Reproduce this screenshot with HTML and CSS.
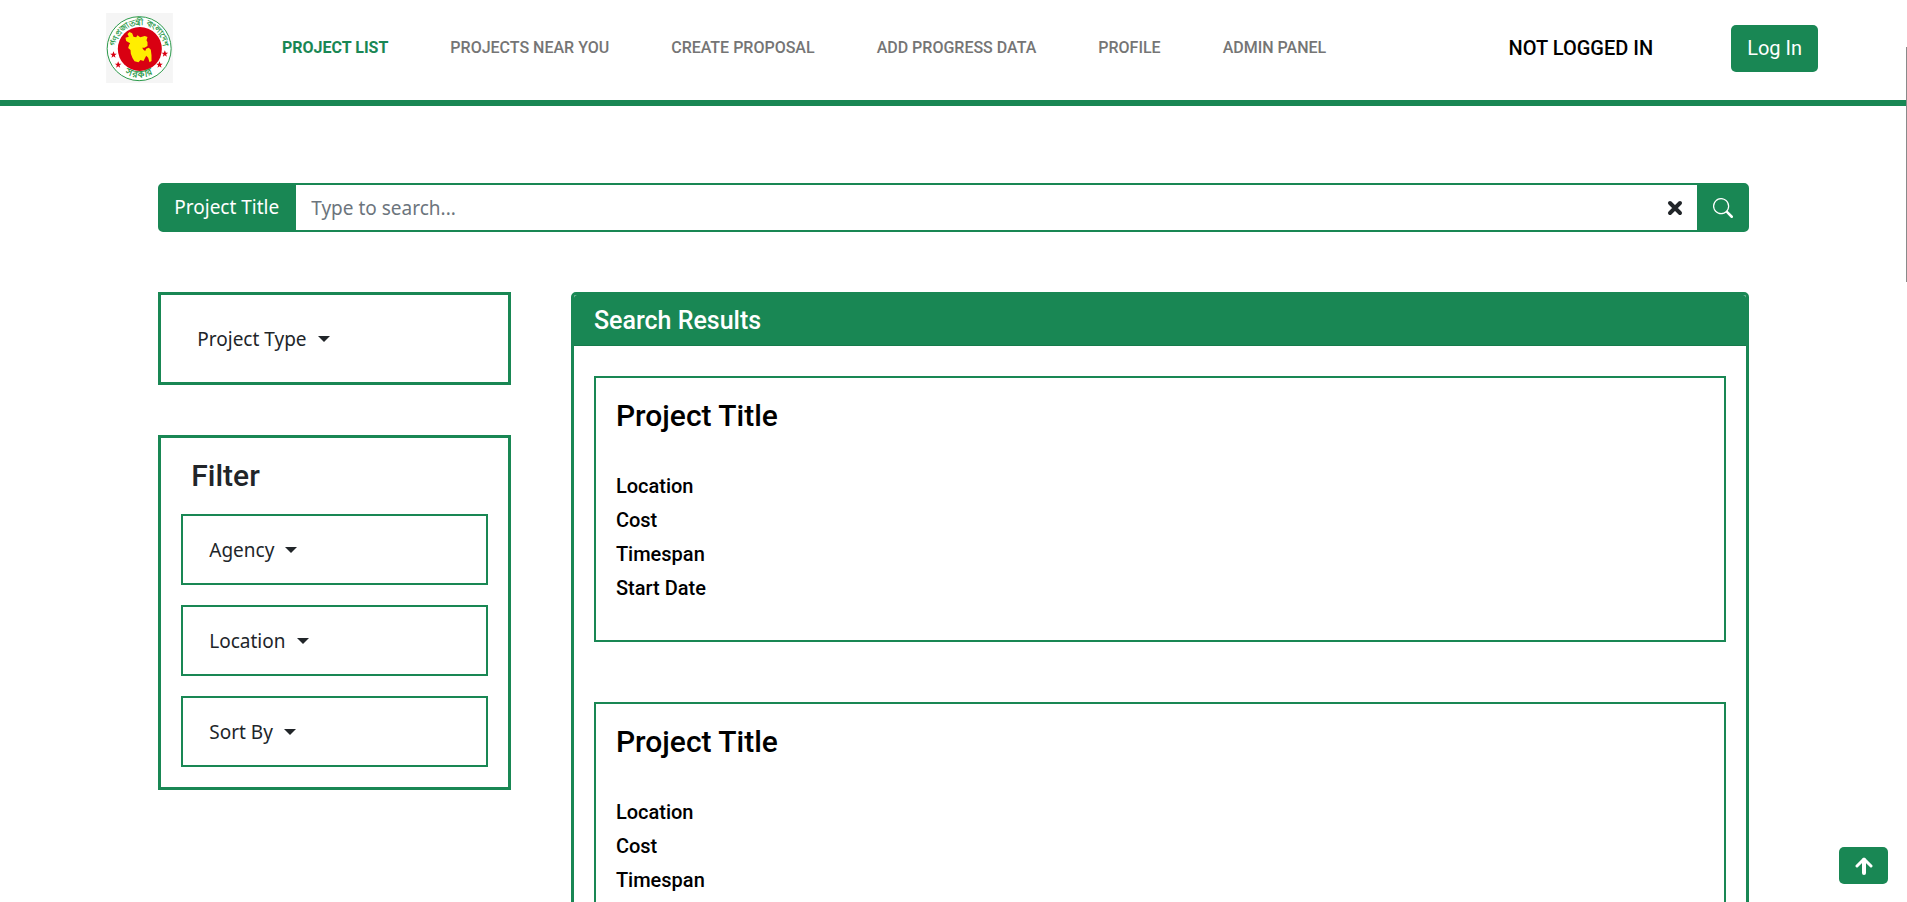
FILE: index.html
```html
<!DOCTYPE html>
<html lang="en">
<head>
<meta charset="utf-8">
<meta name="viewport" content="width=device-width, initial-scale=1">
<title>Project List</title>
<link rel="stylesheet" href="styles.css">
</head>
<body>
<header class="topbar">
  <a class="brand" href="#" aria-label="Home">
    <svg class="brand-logo" viewBox="48 39 200 210" aria-hidden="true">
      <defs>
        <path id="arc-top" d="M80 171 A72 72 0 1 1 216 171"/>
        <path id="arc-bottom" d="M76 196 A88 88 0 0 0 218 196"/>
        <path id="star" d="M0-10 L3-3 10-3 4 2 6 9 0 5-6 9-4 2-10-3-3-3Z"/>
      </defs>
      <rect x="48" y="39" width="200" height="210" fill="#f5f5f5"/>
      <circle cx="147" cy="146" r="96" fill="#fff" stroke="#2c9a4b" stroke-width="3"/>
      <circle cx="149" cy="147" r="66" fill="#d90012"/>
      <path fill="#ffee00" d="M118 96 L126 100 130 110 138 112 142 106 150 112 164 108 172 111 169 121 172 127 172 138 163 143 156 143 160 149 165 153 168 146 176 143 182 149 184 166 184 183 178 187 174 173 168 167 165 173 160 183 151 180 145 187 133 184 127 174 122 161 121 150 114 144 117 134 120 130 108 123 106 113 116 110 112 102Z"/>
      <g fill="#d90012">
        <use href="#star" x="70" y="164"/><use href="#star" x="84" y="194"/>
        <use href="#star" x="224" y="161"/><use href="#star" x="208" y="194"/>
      </g>
      <g class="seal-text">
        <text><textPath href="#arc-top" startOffset="50%">গণপ্রজাতন্ত্রী বাংলাদেশ</textPath></text>
        <text class="seal-text-large"><textPath href="#arc-bottom" startOffset="50%">সরকার</textPath></text>
      </g>
    </svg>
  </a>
  <nav class="nav">
    <a class="nav-link active" href="#">PROJECT LIST</a>
    <a class="nav-link" href="#">PROJECTS NEAR YOU</a>
    <a class="nav-link" href="#">CREATE PROPOSAL</a>
    <a class="nav-link" href="#">ADD PROGRESS DATA</a>
    <a class="nav-link" href="#">PROFILE</a>
    <a class="nav-link" href="#">ADMIN PANEL</a>
  </nav>
  <div class="account">
    <span class="account-name">NOT LOGGED IN</span>
    <button class="login" type="button">Log In</button>
  </div>
</header>

<main class="page">
  <form class="search" role="search">
    <label class="search-label" for="q">Project Title</label>
    <input class="search-input" id="q" type="text" placeholder="Type to search...">
    <button class="search-clear" type="button" aria-label="Clear">
      <svg width="16" height="16" viewBox="0 0 16 16" aria-hidden="true"><path d="M3 3 L13 13 M13 3 L3 13" stroke="#212529" stroke-width="4" stroke-linecap="round"/></svg>
    </button>
    <button class="search-submit" type="submit" aria-label="Search">
      <svg width="20" height="20" viewBox="0 0 16 16" fill="#fff" aria-hidden="true"><path d="M11.742 10.344a6.500 6.500 0 1 0-1.397 1.398h-.001c.03.04.062.078.098.115l3.850 3.850a1 1 0 0 0 1.415-1.414l-3.850-3.850a1.007 1.007 0 0 0-.115-.1zM12 6.500a5.500 5.500 0 1 1-11 0 5.500 5.500 0 0 1 11 0z"/></svg>
    </button>
  </form>

  <div class="columns">
    <aside class="sidebar">
      <section class="panel panel-type">
        <button class="dropdown" type="button" aria-haspopup="true">Project Type</button>
      </section>
      <section class="panel panel-filter">
        <h2 class="filter-title">Filter</h2>
        <div class="filter-item"><button class="dropdown" type="button" aria-haspopup="true">Agency</button></div>
        <div class="filter-item"><button class="dropdown" type="button" aria-haspopup="true">Location</button></div>
        <div class="filter-item"><button class="dropdown" type="button" aria-haspopup="true">Sort By</button></div>
      </section>
    </aside>

    <section class="results">
      <h2 class="results-title">Search Results</h2>
      <div class="results-list">
        <article class="project">
          <h3 class="project-title">Project Title</h3>
          <p class="project-field">Location</p>
          <p class="project-field">Cost</p>
          <p class="project-field">Timespan</p>
          <p class="project-field">Start Date</p>
        </article>
        <article class="project">
          <h3 class="project-title">Project Title</h3>
          <p class="project-field">Location</p>
          <p class="project-field">Cost</p>
          <p class="project-field">Timespan</p>
          <p class="project-field">Start Date</p>
        </article>
      </div>
    </section>
  </div>
</main>

<div class="scroll-thumb" aria-hidden="true"></div>
<button class="to-top" type="button" aria-label="Back to top">
  <svg width="18" height="18" viewBox="0 0 18 18" fill="none" stroke="#fff" stroke-width="4" stroke-linecap="round" stroke-linejoin="round" aria-hidden="true"><path d="M9 16 V3"/><path stroke-width="3" d="M2 9 L9 2 L16 9"/></svg>
</button>
</body>
</html>
```

FILE: styles.css
```css
:root {
  --green: #198754;
  --ink: #212529;
  --head: Roboto, "Liberation Sans", sans-serif;
  --body: "Noto Sans", "Open Sans", sans-serif;
}

* { box-sizing: border-box; }

html { scrollbar-width: none; }

body {
  margin: 0;
  background: #fff;
  color: var(--ink);
  font: 19px/30px var(--body);
}

h2, h3, p { margin: 0; }

button {
  border: 0;
  background: none;
  color: inherit;
  font: inherit;
  cursor: pointer;
}

/* Top bar */
.topbar {
  position: sticky;
  top: 0;
  z-index: 2;
  display: flex;
  align-items: center;
  padding: 13px 89px 17px 106px;
  background: #fff;
  border-bottom: 6px solid var(--green);
  font-family: var(--head);
}

.brand-logo {
  display: block;
  width: 67px;
  height: 70px;
}

.seal-text {
  fill: #2c9a4b;
  font: bold 24px var(--body);
  text-anchor: middle;
}

.seal-text-large { font-size: 29px; }

.nav {
  display: flex;
  gap: 62px;
  margin-left: 109px;
}

.nav-link {
  color: #757575;
  font-size: 16px;
  font-weight: 500;
  text-decoration: none;
  white-space: nowrap;
}

.nav-link.active {
  color: var(--green);
  font-weight: 700;
}

.account {
  display: flex;
  align-items: center;
  gap: 78px;
  margin-left: auto;
  white-space: nowrap;
}

.account-name {
  color: #000;
  font-size: 20px;
  font-weight: 500;
}

.login {
  padding: 8px 16px 9px;
  border-radius: 5px;
  background: var(--green);
  color: #fff;
  font-size: 20px;
}

/* Page */
.page {
  width: 83.4%;
  margin: 0 auto;
  padding: 77px 0 60px;
}

.search {
  display: flex;
  border: 2px solid var(--green);
  border-radius: 5px;
  background: var(--green);
}

.search-label {
  padding: 7px 17px 8px 14px;
  color: #fff;
}

.search-input {
  flex: 1;
  min-width: 0;
  padding: 0 15px;
  border: 0;
  outline: 0;
  background: #fff;
  color: var(--ink);
  font: inherit;
}

.search-input::placeholder {
  color: #6c757d;
  opacity: 1;
}

.search-clear,
.search-submit {
  display: flex;
  align-items: center;
  padding: 0 14px;
}

.search-clear { background: #fff; }
.search-submit { padding: 0 14px 0 16px; }

.columns {
  display: flex;
  align-items: flex-start;
  gap: 60px;
  margin-top: 60px;
}

/* Sidebar */
.sidebar {
  flex: none;
  display: grid;
  gap: 50px;
  width: calc(25% - 45px);
}

.panel { border: 3px solid var(--green); }

.panel-type { padding: 29px 36px 28px; }

.panel-filter {
  display: grid;
  gap: 20px;
  padding: 20px;
}

.filter-title {
  padding-left: 10px;
  font: 500 30px/36px var(--head);
}

.filter-item {
  padding: 19px 26px 18px;
  border: 2px solid var(--green);
}

.dropdown {
  display: flex;
  align-items: center;
  gap: 11px;
  padding: 0;
}

.dropdown::after {
  content: "";
  border: 6px solid transparent;
  border-top-color: currentColor;
  border-bottom: 0;
}

/* Results */
.results {
  flex: 1;
  border: 3px solid var(--green);
  border-radius: 5px;
}

.results-title {
  padding: 11px 20px 9px;
  border-bottom: 1px solid #167a4b;
  border-radius: 3px 3px 0 0;
  background: var(--green);
  color: #fff;
  font: 500 25px/30px var(--head);
}

.results-list {
  display: grid;
  gap: 60px;
  padding: 30px 20px 60px;
}

.project {
  padding: 20px 20px 30px;
  border: 2px solid var(--green);
  color: #000;
}

.project-title {
  margin-bottom: 40px;
  font: 500 30px/36px var(--head);
}

.project-field {
  margin-bottom: 10px;
  font: 500 20px/24px var(--head);
}

/* Floating controls */
.to-top {
  position: fixed;
  right: 19px;
  bottom: 18px;
  display: flex;
  align-items: center;
  justify-content: center;
  width: 49px;
  height: 37px;
  padding: 0;
  border-radius: 5px;
  background: var(--green);
}

.scroll-thumb {
  position: fixed;
  z-index: 3;
  top: 47px;
  right: 0;
  width: 1px;
  height: 235px;
  background: #8a8a8a;
}
```
